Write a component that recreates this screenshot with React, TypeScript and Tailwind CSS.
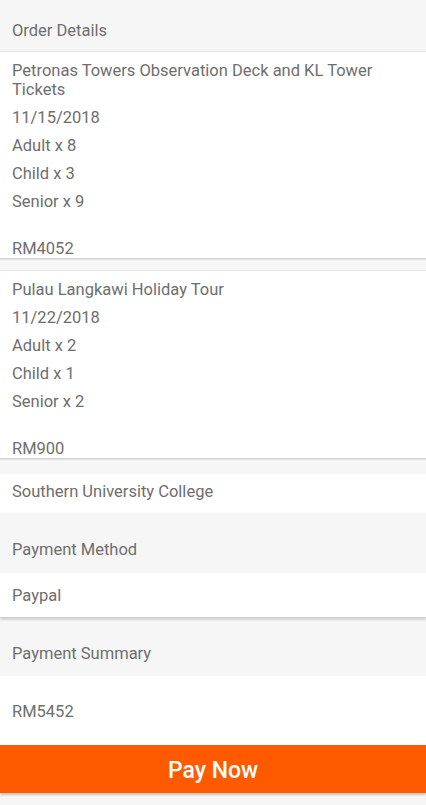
import React from "react";

interface OrderItem {
  title: string;
  date: string;
  adult: number;
  child: number;
  senior: number;
  price: string;
}

const orders: OrderItem[] = [
  {
    title: "Petronas Towers Observation Deck and KL Tower Tickets",
    date: "11/15/2018",
    adult: 8,
    child: 3,
    senior: 9,
    price: "RM4052",
  },
  {
    title: "Pulau Langkawi Holiday Tour",
    date: "11/22/2018",
    adult: 2,
    child: 1,
    senior: 2,
    price: "RM900",
  },
];

const OrderCard = ({ order }: { order: OrderItem }) => (
  <div className="bg-white border-t border-[#e6e6e6] border-b border-b-[#d4d4d4] shadow-[0_1px_1px_rgba(0,0,0,0.08)] px-3 pt-[9px]">
    <p className="leading-[19px] pr-6">{order.title}</p>
    <p className="leading-[19px] mt-[9px]">{order.date}</p>
    <p className="leading-[19px] mt-[9px]">Adult x {order.adult}</p>
    <p className="leading-[19px] mt-[9px]">Child x {order.child}</p>
    <p className="leading-[19px] mt-[9px]">Senior x {order.senior}</p>
    <p className="leading-[19px] mt-[28px]">{order.price}</p>
  </div>
);

export default function App() {
  return (
    <div
      className="w-[426px] h-[805px] overflow-hidden bg-[#f6f6f6] text-[16.5px] text-[#6e6e6e]"
      style={{ fontFamily: "Roboto, 'Liberation Sans', sans-serif" }}
    >
      {/* Order details */}
      <div className="h-[51px] px-3 pt-[21px] leading-[19px]">Order Details</div>

      <OrderCard order={orders[0]} />
      <div className="h-[11px]" />
      <OrderCard order={orders[1]} />

      <div className="h-[15px]" />
      <div className="bg-white h-[39px] px-3 pt-[8px] leading-[19px]">
        Southern University College
      </div>

      {/* Payment method */}
      <div className="h-[60px] px-3 pt-[27px] leading-[19px]">Payment Method</div>
      <div className="bg-white h-[45px] px-3 pt-[13px] leading-[19px] border-b border-[#cfcfcf] shadow-[0_2px_2px_rgba(0,0,0,0.14)]">
        Paypal
      </div>

      {/* Payment summary */}
      <div className="h-[58px] px-3 pt-[26px] leading-[19px]">Payment Summary</div>
      <div className="bg-white h-[69px] px-3 pt-[26px] leading-[19px]">RM5452</div>

      <button className="w-full h-[48px] pt-[5px] bg-[#ff5a00] text-white text-[23px] font-medium flex items-center justify-center shadow-[0_2px_2px_rgba(0,0,0,0.2)]">
        Pay Now
      </button>
    </div>
  );
}
